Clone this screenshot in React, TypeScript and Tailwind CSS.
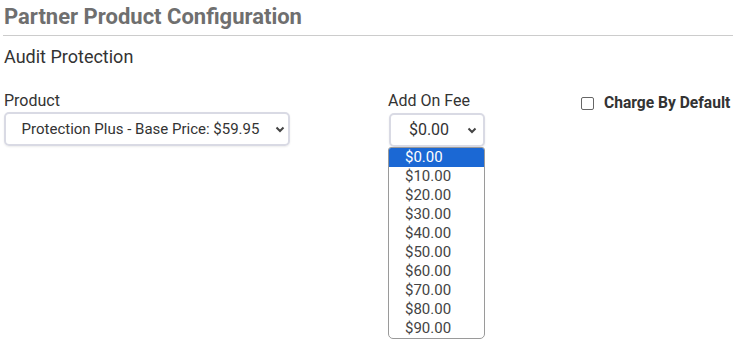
import { useState } from 'react';

const fees = ['$0.00', '$10.00', '$20.00', '$30.00', '$40.00', '$50.00', '$60.00', '$70.00', '$80.00', '$90.00'];

const Chevron = () => (
  <svg width="10" height="7" viewBox="0 0 10 7" className="shrink-0">
    <path d="M1.5 1.5l3.5 3.5 3.5-3.5" fill="none" stroke="#444" strokeWidth="2" />
  </svg>
);

export default function App() {
  const [fee, setFee] = useState('$0.00');
  const [checked, setChecked] = useState(false);

  return (
    <div className="px-[4px] font-['Roboto',sans-serif] text-[#333] bg-white min-h-[344px]">
      <h2 className="pt-[3px] text-[22px] leading-[28px] font-bold text-[#6f6f6f]">Partner Product Configuration</h2>
      <div className="mt-[4px] -ml-[1px] h-[1px] bg-[#cccccc]" />
      <h3 className="mt-[9px] text-[18px] leading-[24px] text-[#333]">Audit Protection</h3>

      <div className="mt-[22px] flex">
        <div className="w-[384px] shrink-0">
          <label className="block text-[16px] leading-[20px] text-[#333]">Product</label>
          <div className="mt-[1px] w-[286px] h-[34px] flex items-center border-2 border-[#d9dae4] rounded-[5px] shadow-[0_1px_2px_rgba(0,0,0,0.08)] pr-[3px]">
            <span className="flex-1 text-center text-[15px] text-[#333]">Protection Plus - Base Price: $59.95</span>
            <Chevron />
          </div>
        </div>

        <div className="w-[193px] shrink-0 relative">
          <label className="block text-[16px] leading-[20px] text-[#333]">Add On Fee</label>
          <div className="mt-[2px] ml-[1px] w-[96px] h-[34px] flex items-center border-2 border-[#d9dae4] rounded-[5px] shadow-[0_1px_2px_rgba(0,0,0,0.08)] pr-[6px]">
            <span className="flex-1 text-center text-[16px] text-[#333]">{fee}</span>
            <Chevron />
          </div>
          <ul className="absolute left-0 top-[56px] w-[97px] border border-[#9a9a9a] rounded-b-[5px] rounded-t-[3px] bg-white overflow-hidden">
            {fees.map((f) => (
              <li
                key={f}
                onClick={() => setFee(f)}
                className={
                  f === fee
                    ? 'pl-[16px] h-[19px] text-[15px] leading-[19px] bg-[#1b68d4] text-white'
                    : 'pl-[16px] h-[19px] text-[15px] leading-[19px] text-[#444]'
                }
              >
                {f}
              </li>
            ))}
          </ul>
        </div>

        <div className="h-[25px] flex items-center gap-[10px] shrink-0 whitespace-nowrap">
          <input
            type="checkbox"
            checked={checked}
            onChange={(e) => setChecked(e.target.checked)}
            className="appearance-none w-[13px] h-[13px] border border-[#666] rounded-[2px] bg-white"
          />
          <span className="text-[15.6px] font-bold text-[#333]">Charge By Default</span>
        </div>
      </div>
    </div>
  );
}
